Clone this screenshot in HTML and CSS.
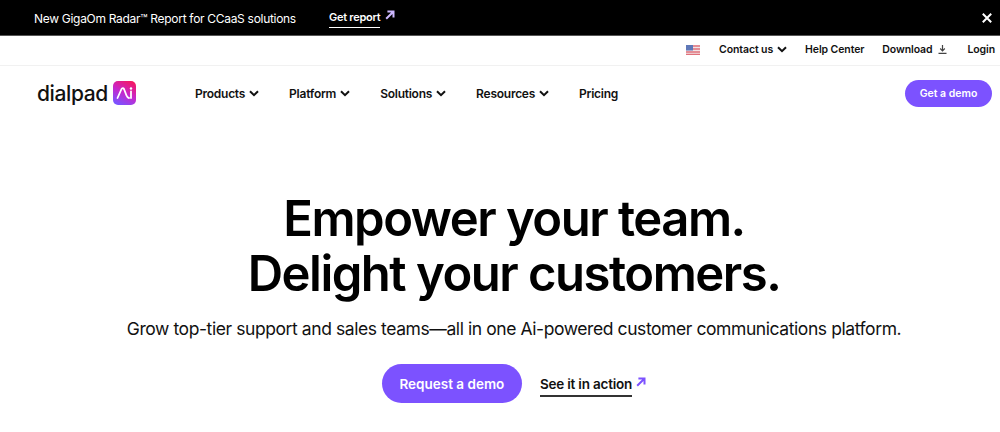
FILE: index.html
```html
<!DOCTYPE html>
<html lang="en">
<head>
    <meta charset="UTF-8">
    <meta name="viewport" content="width=device-width, initial-scale=1.0">
    <title>Dialpad Ai</title>
    <link rel="stylesheet" href="styles.css">
</head>
<body>
    <div class="announce">
        <span class="announce-text">New GigaOm Radar™ Report for CCaaS solutions</span>
        <a class="announce-link" href="#">Get report</a>
        <svg class="announce-arrow" width="10" height="10" viewBox="0 0 10 10"><path d="M1.2 8.800 7.800 2.200M2.400 1.500h6.100v6.100" fill="none" stroke="#cdb8ff" stroke-width="2"/></svg>
        <svg class="announce-close" width="10" height="10" viewBox="0 0 10 10"><path d="M.8.8l8.400 8.400M9.200.8.8 9.200" stroke="#fff" stroke-width="2"/></svg>
    </div>

    <div class="utility">
        <svg class="flag" width="14" height="10" viewBox="0 0 14 10">
            <rect width="14" height="10" fill="#f3e4e6"/>
            <path d="M0 1h14M0 4h14M0 7h14M0 9.500h14" stroke="#e0727c" stroke-width="1.400"/>
            <rect width="7" height="5.500" fill="#5f78b8"/>
        </svg>
        <a class="utility-link has-chevron" href="#">Contact us
            <svg width="10" height="7" viewBox="0 0 10 7"><path d="M1 1.200l4 4 4-4" fill="none" stroke="#111" stroke-width="2"/></svg>
        </a>
        <a class="utility-link" href="#">Help Center</a>
        <a class="utility-link has-download" href="#">Download
            <svg width="9" height="9" viewBox="0 0 9 9"><path d="M4.500 0v5.500M2.200 3.500l2.300 2.300 2.300-2.300M.5 8.300h8" fill="none" stroke="#444" stroke-width="1.200"/></svg>
        </a>
        <a class="utility-link" href="#">Login</a>
    </div>

    <nav class="nav">
        <a class="logo" href="#">
            <span class="logo-word">dialpad</span>
            <svg class="logo-mark" width="23" height="24" viewBox="0 0 23 24">
                <defs>
                    <linearGradient id="logoGrad" x1="0.800" y1="0" x2="0.300" y2="1">
                        <stop offset="0" stop-color="#f5175f"/>
                        <stop offset="0.500" stop-color="#c926c9"/>
                        <stop offset="1" stop-color="#7c52ff"/>
                    </linearGradient>
                </defs>
                <rect width="23" height="24" rx="5" fill="url(#logoGrad)"/>
                <path d="M4.500 17 8.500 8c.6-1.300 1.900-1.300 2.500 0l2.500 6.500c.5 1.300 1.500 2.300 2.500 2.500" fill="none" stroke="#fff" stroke-width="1.800" stroke-linecap="round"/>
                <path d="M18 10.500V17" stroke="#fff" stroke-width="1.800" stroke-linecap="round"/>
                <circle cx="18" cy="7.500" r="1.200" fill="#fff"/>
            </svg>
        </a>
        <div class="nav-links">
            <a class="nav-link" href="#">Products <svg width="10" height="7" viewBox="0 0 10 7"><path d="M1 1.200l4 4 4-4" fill="none" stroke="#111" stroke-width="2"/></svg></a>
            <a class="nav-link" href="#">Platform <svg width="10" height="7" viewBox="0 0 10 7"><path d="M1 1.200l4 4 4-4" fill="none" stroke="#111" stroke-width="2"/></svg></a>
            <a class="nav-link" href="#">Solutions <svg width="10" height="7" viewBox="0 0 10 7"><path d="M1 1.200l4 4 4-4" fill="none" stroke="#111" stroke-width="2"/></svg></a>
            <a class="nav-link" href="#">Resources <svg width="10" height="7" viewBox="0 0 10 7"><path d="M1 1.200l4 4 4-4" fill="none" stroke="#111" stroke-width="2"/></svg></a>
            <a class="nav-link" href="#">Pricing</a>
        </div>
        <a class="demo-small" href="#">Get a demo</a>
    </nav>

    <main class="hero">
        <h1>Empower your team.<br>Delight your customers.</h1>
        <p class="hero-sub">Grow top-tier support and sales teams—all in one Ai-powered customer communications platform.</p>
        <div class="hero-actions">
            <a class="demo-big" href="#">Request a demo</a>
            <a class="see-link" href="#">See it in action</a>
            <svg class="see-arrow" width="10" height="10" viewBox="0 0 10 10"><path d="M1.200 8.800 7.800 2.200M2.400 1.500h6.100v6.100" fill="none" stroke="#7c52ff" stroke-width="2"/></svg>
        </div>
    </main>
</body>
</html>
```

FILE: styles.css
```css
body {
    font-family: Inter, "Liberation Sans", sans-serif;
    background-color: #fff;
    color: #111;
    margin: 0;
    height: 432px;
    overflow: hidden;
}
a {
    color: inherit;
    text-decoration: none;
}
.announce {
    height: 35px;
    background: #000;
    border-bottom: 1px solid #555;
    color: #fff;
    display: flex;
    align-items: center;
    padding: 0 8px 0 34px;
}
.announce-text {
    font-size: 12px;
    letter-spacing: -0.300px;
    padding-top: 1px;
}
.announce-link {
    font-size: 11px;
    font-weight: 600;
    letter-spacing: -0.250px;
    margin-left: 33px;
    padding: 3px 0;
    border-bottom: 1px solid #fff;
}
.announce-arrow {
    margin: 0 0 6px 5px;
}
.announce-close {
    margin-left: auto;
}
.utility {
    height: 27px;
    padding: 0 5px 2px 0;
    border-bottom: 1px solid #f1f1f1;
    display: flex;
    align-items: center;
    justify-content: flex-end;
    gap: 18px;
    font-size: 10.500px;
    font-weight: 600;
    letter-spacing: -0.100px;
}
.flag {
    margin-right: 1px;
}
.utility-link {
    display: flex;
    align-items: center;
    gap: 4px;
}
.has-download {
    gap: 6px;
    margin-right: 2px;
}
.nav {
    height: 54px;
    display: flex;
    align-items: center;
    padding: 0 8px 0 37px;
}
.logo {
    display: flex;
    align-items: center;
    gap: 5px;
    width: 158px;
}
.logo-word {
    font-size: 21px;
    font-weight: 500;
    letter-spacing: -0.400px;
    line-height: 1;
}
.nav-links {
    display: flex;
    gap: 30px;
    font-size: 12px;
    font-weight: 600;
    letter-spacing: -0.250px;
}
.nav-link {
    display: flex;
    align-items: center;
    gap: 4px;
}
.demo-small {
    margin-left: auto;
    width: 87px;
    height: 27px;
    border-radius: 14px;
    background: #7c52ff;
    color: #fff;
    font-size: 10.500px;
    font-weight: 600;
    display: flex;
    align-items: center;
    justify-content: center;
}
.hero {
    display: flex;
    flex-direction: column;
    align-items: center;
    padding: 71px 0 0 28px;
}
h1 {
    margin: 0;
    font-size: 49px;
    line-height: 55px;
    font-weight: 600;
    letter-spacing: -1.500px;
    text-align: center;
    color: #000;
}
.hero-sub {
    margin: 15px 0 0;
    font-size: 17.500px;
    line-height: 26px;
    letter-spacing: -0.420px;
}
.hero-actions {
    display: flex;
    align-items: center;
    margin-top: 22px;
}
.demo-big {
    width: 140px;
    height: 39px;
    border-radius: 20px;
    background: #7c52ff;
    color: #fff;
    font-size: 13.500px;
    font-weight: 600;
    display: flex;
    align-items: center;
    justify-content: center;
}
.see-link {
    margin-left: 18px;
    font-size: 13.500px;
    font-weight: 600;
    letter-spacing: -0.200px;
    padding: 5px 0 3px;
    border-bottom: 2px solid #333;
}
.see-arrow {
    margin: 0 0 4px 4px;
}
```
